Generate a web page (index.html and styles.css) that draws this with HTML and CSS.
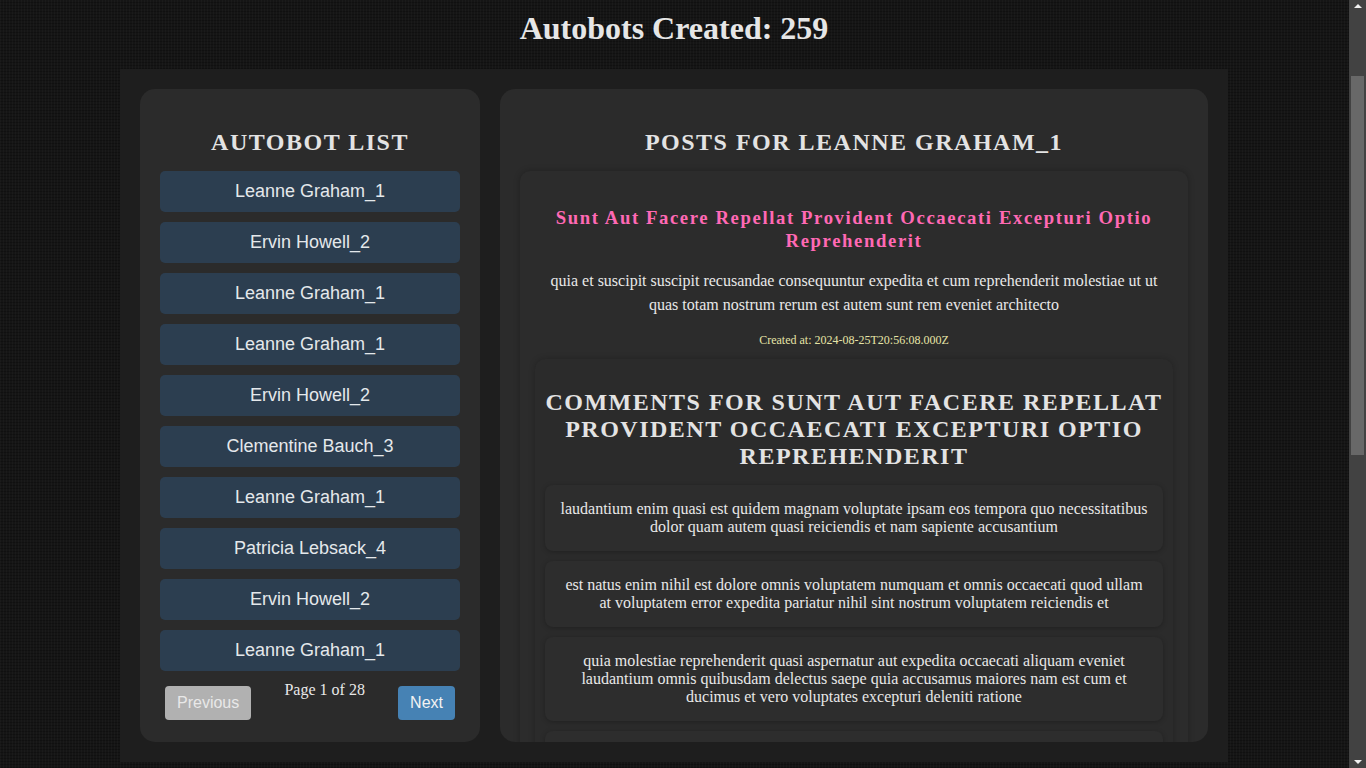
FILE: index.html
```html
<!DOCTYPE html>
<html lang="en">
<head>
<meta charset="utf-8">
<title>Autobots</title>
<link rel="stylesheet" href="styles.css">
</head>
<body>
  <h1 class="page-title">Autobots Created: 259</h1>
  <div class="layout">
    <aside class="panel list-panel">
      <h2 class="panel-title">Autobot List</h2>
      <ul class="bot-list">
        <li class="bot-item">Leanne Graham_1</li>
        <li class="bot-item">Ervin Howell_2</li>
        <li class="bot-item">Leanne Graham_1</li>
        <li class="bot-item">Leanne Graham_1</li>
        <li class="bot-item">Ervin Howell_2</li>
        <li class="bot-item">Clementine Bauch_3</li>
        <li class="bot-item">Leanne Graham_1</li>
        <li class="bot-item">Patricia Lebsack_4</li>
        <li class="bot-item">Ervin Howell_2</li>
        <li class="bot-item">Leanne Graham_1</li>
      </ul>
      <div class="pager">
        <button class="pager-btn pager-prev" disabled>Previous</button>
        <span class="pager-info">Page 1 of 28</span>
        <button class="pager-btn pager-next">Next</button>
      </div>
    </aside>
    <section class="panel posts-panel">
      <h2 class="panel-title">Posts for Leanne Graham_1</h2>
      <article class="post">
        <h3 class="post-title">Sunt Aut Facere Repellat Provident Occaecati Excepturi Optio Reprehenderit</h3>
        <p class="post-body">quia et suscipit suscipit recusandae consequuntur expedita et cum reprehenderit molestiae ut ut quas totam nostrum rerum est autem sunt rem eveniet architecto</p>
        <p class="post-date">Created at: 2024-08-25T20:56:08.000Z</p>
        <div class="comments">
          <h2 class="panel-title">Comments for Sunt Aut Facere Repellat Provident Occaecati Excepturi Optio Reprehenderit</h2>
          <div class="comment">laudantium enim quasi est quidem magnam voluptate ipsam eos tempora quo necessitatibus dolor quam autem quasi reiciendis et nam sapiente accusantium</div>
          <div class="comment">est natus enim nihil est dolore omnis voluptatem numquam et omnis occaecati quod ullam at voluptatem error expedita pariatur nihil sint nostrum voluptatem reiciendis et</div>
          <div class="comment">quia molestiae reprehenderit quasi aspernatur aut expedita occaecati aliquam eveniet laudantium omnis quibusdam delectus saepe quia accusamus maiores nam est cum et ducimus et vero voluptates excepturi deleniti ratione</div>
          <div class="comment comment-empty"></div>
        </div>
      </article>
    </section>
  </div>
  <div class="scrollbar" aria-hidden="true">
    <span class="scroll-arrow scroll-up"></span>
    <span class="scroll-thumb"></span>
    <span class="scroll-arrow scroll-down"></span>
  </div>
</body>
</html>
```

FILE: styles.css
```css
html {
  color-scheme: dark;
}

body {
  margin: 0 18px 0 0;
  font-family: "Liberation Serif", "Times New Roman", serif;
  color: #e0e0e0;
  background-color: #151515;
  background-image:
    repeating-linear-gradient(90deg, rgba(255, 255, 255, 0.025) 0 1px, transparent 1px 3px),
    repeating-linear-gradient(0deg, rgba(0, 0, 0, 0.25) 0 1px, transparent 1px 3px);
  overflow: hidden;
  height: 768px;
}

.page-title {
  margin: 10px 0 22px;
  font-size: 32px;
  font-weight: bold;
  text-align: center;
  color: #e6e6e6;
}

.layout {
  box-sizing: border-box;
  width: 1108px;
  margin: 0 auto;
  padding: 20px;
  display: flex;
  gap: 20px;
  background: #1e1e1e;
}

.panel {
  box-sizing: border-box;
  height: 653px;
  padding: 20px;
  background: #2b2b2b;
  border-radius: 15px;
  overflow: hidden;
}

.list-panel {
  width: 340px;
  flex: none;
}

.posts-panel {
  flex: 1;
  min-width: 0;
}

.panel-title {
  margin: 20px 0 15px;
  font-size: 24px;
  font-weight: bold;
  text-transform: uppercase;
  letter-spacing: 1.5px;
  text-align: center;
  color: #e3e3e3;
}

.bot-list {
  list-style: none;
  margin: 0;
  padding: 0;
}

.bot-item {
  height: 41px;
  box-sizing: border-box;
  padding: 10px;
  margin-bottom: 10px;
  background: #2c3e50;
  border-radius: 5px;
  font-family: "Liberation Sans", Arial, sans-serif;
  font-size: 18px;
  line-height: 21px;
  text-align: center;
  color: #e4e8eb;
}

.pager {
  display: flex;
  justify-content: space-between;
  align-items: flex-start;
}

.pager-info {
  font-size: 16px;
  color: #e8e8e8;
}

.pager-btn {
  margin: 5px;
  padding: 8px 12px;
  border: none;
  border-radius: 4px;
  font-family: "Liberation Sans", Arial, sans-serif;
  font-size: 16px;
  line-height: 18px;
}

.pager-prev {
  background: #b1b1b1;
  color: #e8e8e8;
}

.pager-next {
  background: #4682b4;
  color: #f2f2f2;
}

.post {
  padding: 15px;
  background: #2c2c2c;
  border-radius: 10px;
  box-shadow: 0 0 6px rgba(0, 0, 0, 0.25);
}

.post-title {
  margin: 20px 0 16px;
  font-size: 18.72px;
  line-height: 23.4px;
  letter-spacing: 1.6px;
  text-align: center;
  color: #ff69b4;
}

.post-body {
  margin: 16px 0 14px;
  font-size: 16px;
  line-height: 24px;
  text-align: center;
  color: #e8e8e8;
}

.post-date {
  margin: 14px 0 10px;
  font-size: 12px;
  line-height: 18px;
  text-align: center;
  color: #e6e4a6;
}

.comments {
  padding: 10px;
  background: #2b2b2b;
  border-radius: 10px;
  box-shadow: 0 0 6px rgba(0, 0, 0, 0.22);
}

.comment {
  padding: 15px;
  margin-bottom: 10px;
  background: #2d2d2d;
  border-radius: 8px;
  box-shadow: 0 1px 5px rgba(0, 0, 0, 0.25);
  font-size: 16px;
  text-align: center;
  color: #e8e8e8;
}

.comment-empty {
  height: 40px;
}

.scrollbar {
  position: fixed;
  top: 0;
  right: 0;
  width: 17px;
  height: 100vh;
  background: #424242;
}

.scroll-thumb {
  position: absolute;
  left: 2px;
  top: 76px;
  width: 13px;
  height: 379px;
  background: #686868;
}

.scroll-arrow {
  position: absolute;
  left: 5px;
  width: 0;
  height: 0;
  border-left: 4px solid transparent;
  border-right: 4px solid transparent;
}

.scroll-up {
  top: 4px;
  border-bottom: 4px solid #f0f0f0;
}

.scroll-down {
  bottom: 4px;
  border-top: 4px solid #f0f0f0;
}
```
